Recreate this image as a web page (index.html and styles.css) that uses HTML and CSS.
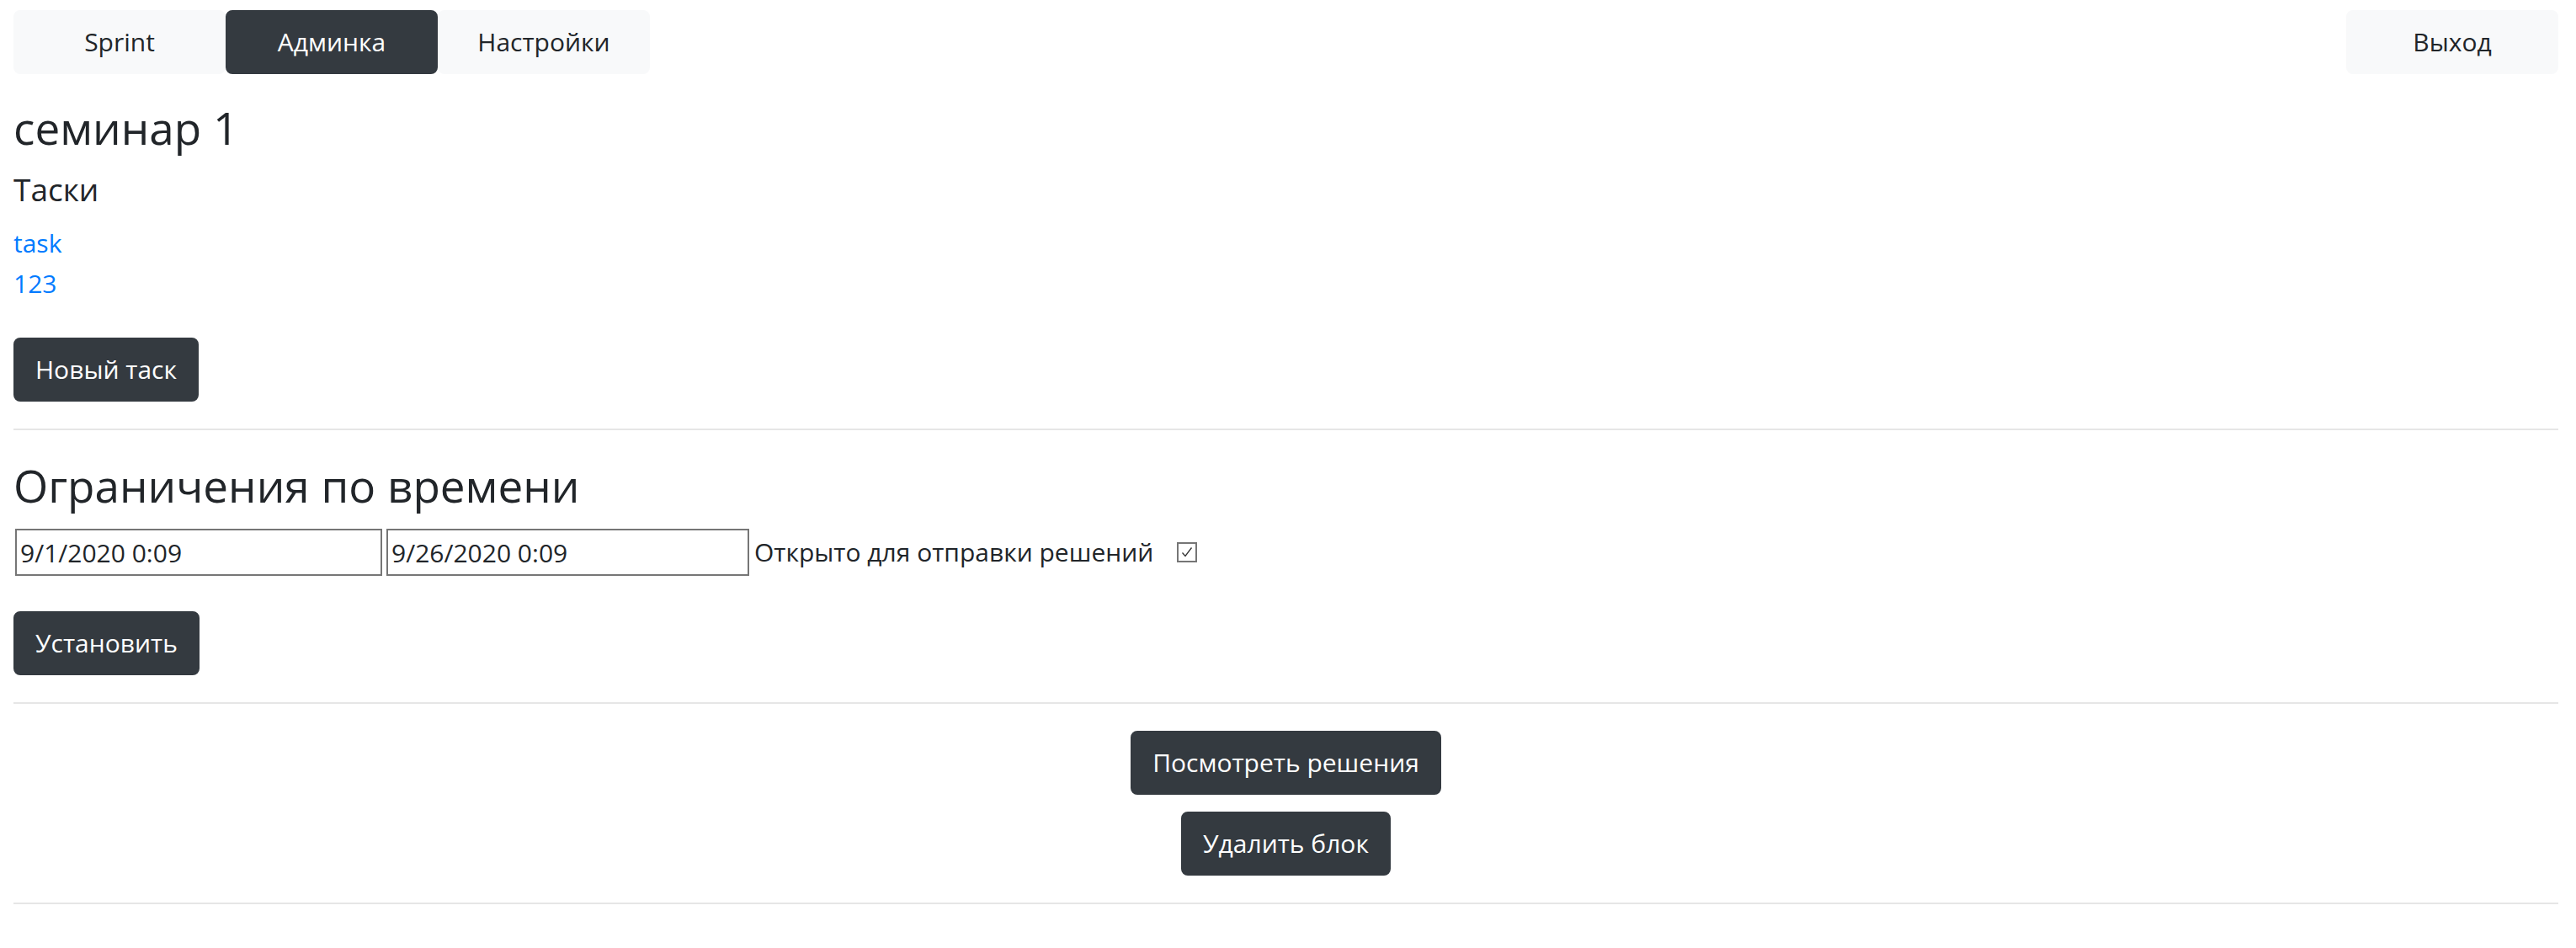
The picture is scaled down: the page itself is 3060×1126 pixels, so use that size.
FILE: index.html
```html
<!DOCTYPE html>
<html lang="ru">
<head>
<meta charset="utf-8">
<title>семинар 1</title>
<link rel="stylesheet" href="styles.css">
</head>
<body>
<div class="page">
  <nav class="topnav">
    <div class="navgroup">
      <a class="btn btn-light nav-btn" href="#">Sprint</a>
      <a class="btn btn-dark nav-btn" href="#">Админка</a>
      <a class="btn btn-light nav-btn" href="#">Настройки</a>
    </div>
    <a class="btn btn-light nav-btn" href="#">Выход</a>
  </nav>

  <section class="block">
    <h3 class="title">семинар 1</h3>
    <h5 class="subtitle">Таски</h5>
    <div class="tasks">
      <a class="task-link" href="#">task</a>
      <a class="task-link" href="#">123</a>
    </div>
    <div><button class="btn btn-dark">Новый таск</button></div>
  </section>

  <hr class="sep">

  <section class="block">
    <h3 class="title">Ограничения по времени</h3>
    <div class="time-row">
      <input class="date-input first" type="text" value="9/1/2020 0:09">
      <input class="date-input second" type="text" value="9/26/2020 0:09">
      <span class="open-label">Открыто для отправки решений</span>
      <span class="check">
        <svg width="24" height="24" viewBox="0 0 24 24"><rect x="1" y="1" width="22" height="22" fill="#fff" stroke="#767676" stroke-width="2"/><path d="M6.5 12.5 L10 16.5 L17.5 6.5" fill="none" stroke="#333" stroke-width="1.3"/></svg>
      </span>
    </div>
    <div><button class="btn btn-dark">Установить</button></div>
  </section>

  <hr class="sep">

  <section class="actions">
    <button class="btn btn-dark">Посмотреть решения</button>
    <button class="btn btn-dark">Удалить блок</button>
  </section>

  <hr class="sep">
</div>
</body>
</html>
```

FILE: styles.css
```css
html, body {
  margin: 0;
  padding: 0;
  background: #fff;
}

body {
  font-family: "Open Sans", "Noto Sans", sans-serif;
  font-size: 30px;
  line-height: 48px;
  color: #212529;
}

.page {
  padding: 12px 21px 0 16px;
}

.topnav {
  display: flex;
  justify-content: space-between;
  align-items: center;
  margin-bottom: 30px;
}

.navgroup {
  display: flex;
}

.btn {
  display: inline-block;
  box-sizing: border-box;
  height: 76px;
  padding: 12px 24px;
  border: 2px solid transparent;
  border-radius: 8px;
  font-family: inherit;
  font-size: 30px;
  line-height: 48px;
  text-align: center;
  text-decoration: none;
  cursor: pointer;
}

.btn-light {
  background: #f8f9fa;
  border-color: #f8f9fa;
  color: #212529;
}

.btn-dark {
  background: #343a40;
  border-color: #343a40;
  color: #fff;
}

.nav-btn {
  width: 252px;
}

.block {
  display: flex;
  flex-direction: column;
  align-items: flex-start;
}

.title {
  margin: 0 0 16px;
  font-size: 53px;
  font-weight: 400;
  line-height: 67px;
}

.subtitle {
  margin: 0 0 16px;
  font-size: 37px;
  font-weight: 400;
  line-height: 48px;
}

.tasks {
  display: flex;
  flex-direction: column;
  margin-bottom: 40px;
}

.task-link {
  color: #007bff;
  text-decoration: none;
}

.sep {
  margin: 32px 0;
  border: 0;
  border-top: 2px solid #e6e6e6;
  height: 0;
}

.time-row {
  display: flex;
  align-items: center;
  margin-top: 2px;
  margin-bottom: 42px;
}

.date-input {
  box-sizing: border-box;
  height: 56px;
  margin: 0;
  padding: 2px 4px;
  border: 2px solid #767676;
  border-radius: 0;
  font-family: inherit;
  font-size: 30px;
  line-height: 48px;
  color: #212529;
  background: #fff;
}

.date-input.first {
  width: 436px;
  margin-left: 2px;
}

.date-input.second {
  width: 431px;
  margin-left: 5px;
}

.open-label {
  margin-left: 6px;
}

.check {
  display: flex;
  margin-left: 28px;
}

.actions {
  display: flex;
  flex-direction: column;
  align-items: center;
  gap: 20px;
}
```
